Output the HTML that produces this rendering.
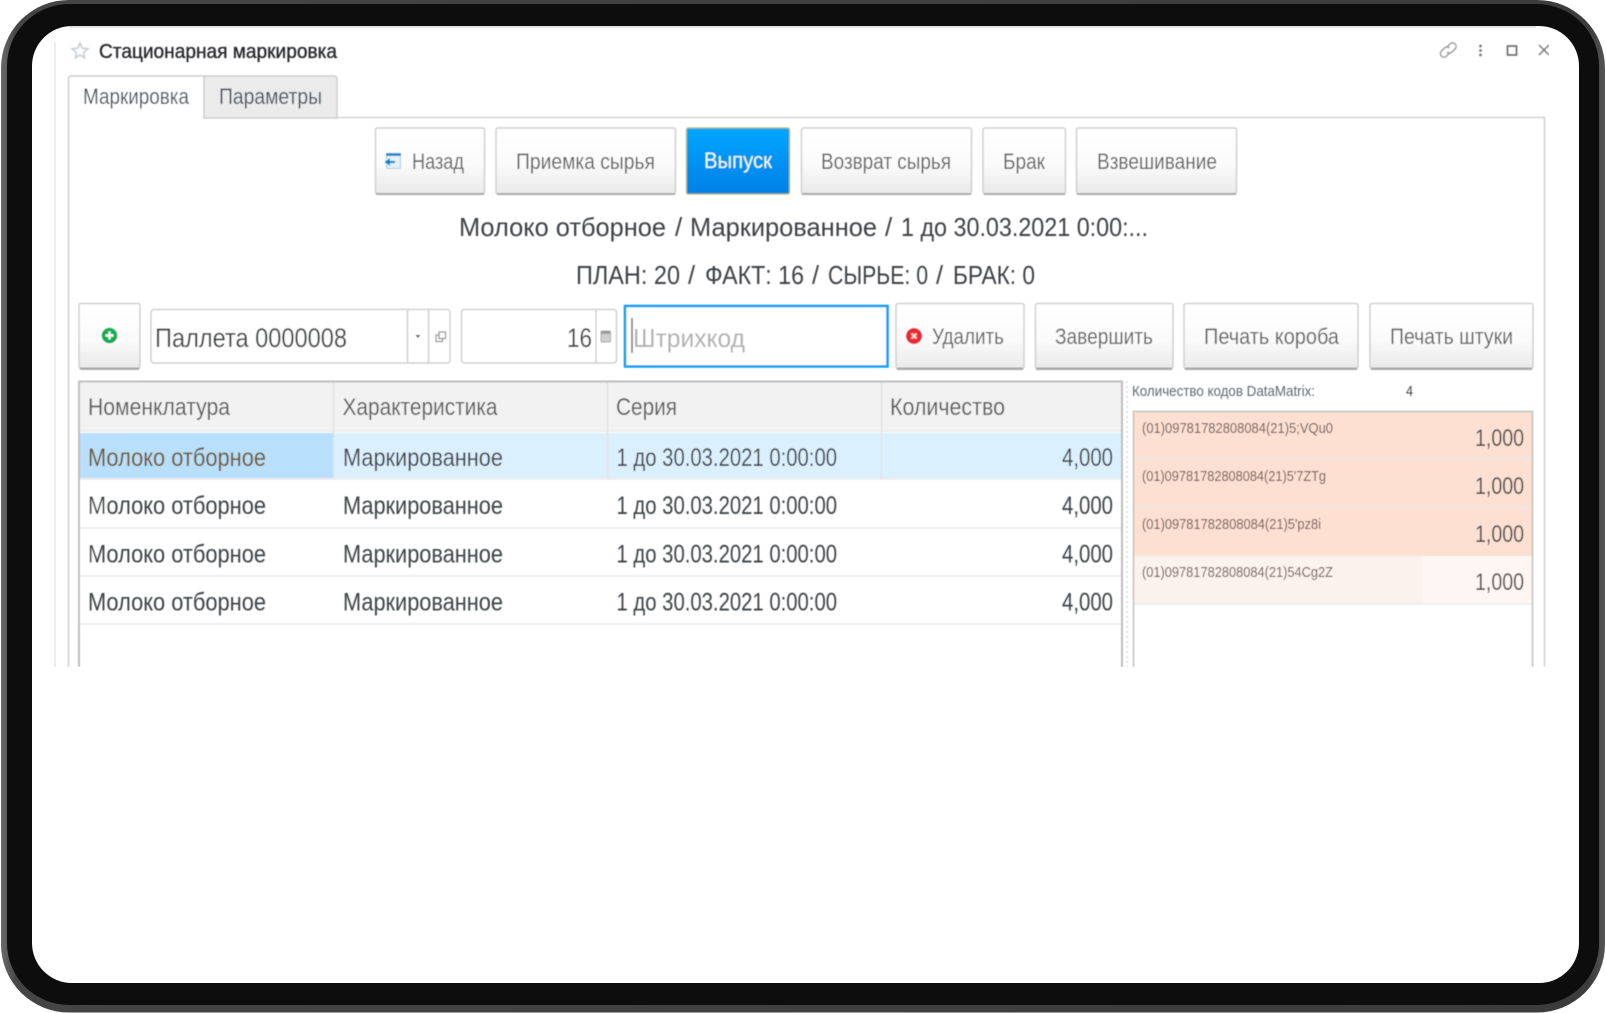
<!DOCTYPE html>
<html lang="ru">
<head>
<meta charset="utf-8">
<title>Стационарная маркировка</title>
<style>
html,body{margin:0;padding:0;background:#fff;width:1606px;height:1013px;overflow:hidden}
svg{display:block}
text{font-family:"Liberation Sans",sans-serif;fill:#4a4a4a}
.b{fill:url(#btn);stroke:#cfcfcf;stroke-width:1.5}
.bs{fill:#a8a8a8}
.btxt{font-size:22px;fill:#626262}
.cell{font-size:25px;fill:#3e4245}
.hdr{font-size:24px;fill:#5c5c5c}
.code{font-size:14.5px;fill:#6a5650}
.num{font-size:24px;fill:#484848}
.h1{font-size:26px;fill:#3e4144}
.h2{font-size:25.5px;fill:#3e4144}
</style>
</head>
<body>
<svg width="1606" height="1013" viewBox="0 0 1606 1013" xmlns="http://www.w3.org/2000/svg">
<defs>
<linearGradient id="btn" x1="0" y1="0" x2="0" y2="1">
<stop offset="0" stop-color="#fff"/><stop offset=".55" stop-color="#fbfbfb"/><stop offset="1" stop-color="#e9e9e9"/>
</linearGradient>
<linearGradient id="blue" x1="0" y1="0" x2="0" y2="1">
<stop offset="0" stop-color="#00a6ff"/><stop offset="1" stop-color="#0080e6"/>
</linearGradient>
<linearGradient id="edge" x1="0" y1="0" x2="1" y2="0">
<stop offset="0" stop-color="#6a6a6a"/><stop offset=".01" stop-color="#454545"/><stop offset=".99" stop-color="#3c3c3c"/><stop offset="1" stop-color="#555"/>
</linearGradient>
<filter id="soft" x="0" y="0" width="100%" height="100%"><feGaussianBlur stdDeviation="0.5"/></filter>
</defs>

<!-- device -->
<rect x="1" y="0" width="1604" height="1012.500" rx="68" fill="url(#edge)"/>
<rect x="7" y="4" width="1592" height="1001" rx="62" fill="#0d0d0d"/>
<rect x="32" y="26" width="1547" height="957" rx="40" fill="#fff"/>
<line x1="70" y1="27" x2="1536" y2="27" stroke="#c8c8c8" stroke-width="1"/>

<g filter="url(#soft)">
<!-- window frame -->
<line x1="54.500" y1="42" x2="54.500" y2="667" stroke="#c4c4c4" stroke-width="1.200"/>

<!-- star -->
<path d="M80 43l2.200 5.200 5.600.5-4.300 3.700 1.300 5.500L80 55l-4.800 2.900 1.300-5.500-4.300-3.700 5.600-.5z" fill="none" stroke="#c9ced2" stroke-width="1.600"/>
<text x="99" y="58" font-size="20" style="fill:#26282a;stroke:#26282a;stroke-width:.35px" textLength="238" lengthAdjust="spacingAndGlyphs">Стационарная маркировка</text>

<!-- header icons -->
<g fill="none" stroke="#9a9a9a" stroke-width="1.400" stroke-linecap="round">
<path d="M1447 47l3.500-3.500a3.600 3.600 0 0 1 5 5l-3.500 3.500a3.600 3.600 0 0 1-4.500.4"/>
<path d="M1449.500 53l-3.500 3.500a3.600 3.600 0 0 1-5-5l3.500-3.500a3.600 3.600 0 0 1 4.500-.4"/>
</g>
<circle cx="1480.500" cy="46" r="1.400" fill="#777"/><circle cx="1480.500" cy="50.500" r="1.400" fill="#777"/><circle cx="1480.500" cy="55" r="1.400" fill="#777"/>
<rect x="1507.500" y="46" width="9" height="9" fill="none" stroke="#666" stroke-width="1.600"/>
<path d="M1539 45l10 10M1549 45l-10 10" stroke="#777" stroke-width="1.400" fill="none"/>

<!-- tabs + panel -->
<path d="M68.500 667V79q0-3 3-3H204V118" fill="#fff" stroke="#cdcdcd" stroke-width="1.500"/>
<path d="M204 118V76H334q3 0 3 3V118z" fill="#ebebeb" stroke="#cdcdcd" stroke-width="1.500"/>
<path d="M337 117.500H1544.500V667" fill="none" stroke="#d2d2d2" stroke-width="1.500"/>
<text x="83" y="104" font-size="22" style="fill:#46525c" textLength="106" lengthAdjust="spacingAndGlyphs">Маркировка</text>
<text x="219" y="104" font-size="22" style="fill:#46525c" textLength="103" lengthAdjust="spacingAndGlyphs">Параметры</text>

<!-- top buttons -->
<rect x="375.500" y="128" width="109" height="66" rx="2" class="b"/><rect x="376" y="193" width="108" height="2" class="bs"/>
<rect x="496" y="128" width="179.500" height="66" rx="2" class="b"/><rect x="497" y="193" width="178" height="2" class="bs"/>
<rect x="686.500" y="128" width="103" height="66" rx="2" fill="url(#blue)" stroke="#b7b36a" stroke-width="1.200"/>
<rect x="801.500" y="128" width="170" height="66" rx="2" class="b"/><rect x="802" y="193" width="169" height="2" class="bs"/>
<rect x="983" y="128" width="82.500" height="66" rx="2" class="b"/><rect x="984" y="193" width="81" height="2" class="bs"/>
<rect x="1076.500" y="128" width="160" height="66" rx="2" class="b"/><rect x="1077" y="193" width="159" height="2" class="bs"/>

<!-- back icon -->
<rect x="386.500" y="153.500" width="14" height="15" rx="1.500" fill="#e6f2f9" stroke="#a7cde4" stroke-width="1"/>
<rect x="386" y="153" width="15" height="3" fill="#1d8fd0"/>
<path d="M385 162h10" stroke="#0d84cc" stroke-width="2.200" fill="none"/>
<path d="M385 162l5-4v8z" fill="#0d84cc"/>

<text x="412" y="169" class="btxt" textLength="52" lengthAdjust="spacingAndGlyphs">Назад</text>
<text x="516" y="169" class="btxt" textLength="139" lengthAdjust="spacingAndGlyphs">Приемка сырья</text>
<text x="704" y="168" class="btxt" style="fill:#f2f9ff" textLength="68" lengthAdjust="spacingAndGlyphs">Выпуск</text>
<text x="821" y="169" class="btxt" textLength="130" lengthAdjust="spacingAndGlyphs">Возврат сырья</text>
<text x="1003" y="169" class="btxt" textLength="42" lengthAdjust="spacingAndGlyphs">Брак</text>
<text x="1097" y="169" class="btxt" textLength="120" lengthAdjust="spacingAndGlyphs">Взвешивание</text>

<!-- headings -->
<text x="459" y="236" class="h1" textLength="207" lengthAdjust="spacingAndGlyphs">Молоко отборное</text>
<text x="675" y="236" class="h1">/</text>
<text x="690" y="236" class="h1" textLength="187" lengthAdjust="spacingAndGlyphs">Маркированное</text>
<text x="885" y="236" class="h1">/</text>
<text x="901" y="236" class="h1" textLength="247" lengthAdjust="spacingAndGlyphs">1 до 30.03.2021 0:00:...</text>

<text x="576" y="284" class="h2" textLength="104" lengthAdjust="spacingAndGlyphs">ПЛАН: 20</text>
<text x="688" y="284" class="h2">/</text>
<text x="705" y="284" class="h2" textLength="99" lengthAdjust="spacingAndGlyphs">ФАКТ: 16</text>
<text x="812" y="284" class="h2">/</text>
<text x="828" y="284" class="h2" textLength="100" lengthAdjust="spacingAndGlyphs">СЫРЬЕ: 0</text>
<text x="936" y="284" class="h2">/</text>
<text x="953" y="284" class="h2" textLength="82" lengthAdjust="spacingAndGlyphs">БРАК: 0</text>

<!-- add button -->
<rect x="79" y="303.500" width="61" height="65" rx="2" class="b"/><rect x="80" y="367.500" width="59" height="2.500" class="bs"/>
<circle cx="109.500" cy="335.500" r="7.800" fill="#0aae50"/>
<path d="M109.500 331.500v8M105.500 335.500h8" stroke="#fff" stroke-width="2.400"/>

<!-- pallet field -->
<rect x="151" y="309.500" width="299" height="53.500" rx="3" fill="#fff" stroke="#cfcfcf" stroke-width="1.500"/>
<line x1="407.500" y1="310" x2="407.500" y2="363" stroke="#cfcfcf" stroke-width="1.500"/>
<line x1="428.500" y1="310" x2="428.500" y2="363" stroke="#cfcfcf" stroke-width="1.500"/>
<path d="M415.500 335h5l-2.500 3z" fill="#555"/>
<rect x="436" y="335" width="6.500" height="6.500" fill="#fff" stroke="#8a8a8a" stroke-width="1.200"/>
<rect x="439" y="332" width="6.500" height="6.500" fill="#fff" stroke="#8a8a8a" stroke-width="1.200"/>
<text x="155" y="347" font-size="27" style="fill:#3c3f42" textLength="192" lengthAdjust="spacingAndGlyphs">Паллета 0000008</text>

<!-- qty field -->
<rect x="461.500" y="309.500" width="155" height="53.500" rx="3" fill="#fff" stroke="#cfcfcf" stroke-width="1.500"/>
<line x1="596" y1="310" x2="596" y2="363" stroke="#cfcfcf" stroke-width="1.500"/>
<rect x="601" y="331" width="9.500" height="11" rx="1" fill="#d0d0d0" stroke="#a6a6a6"/>
<rect x="601" y="331" width="9.500" height="3" fill="#9e9e9e"/>
<text x="567" y="347" font-size="27" style="fill:#3c3f42" textLength="25" lengthAdjust="spacingAndGlyphs">16</text>

<!-- barcode -->
<rect x="625" y="306" width="262.500" height="60.500" fill="#fff" stroke="#0a9cf5" stroke-width="2.500"/>
<line x1="632" y1="318" x2="632" y2="353" stroke="#666" stroke-width="1.500"/>
<text x="633" y="347" font-size="26" style="fill:#b0b0b0" textLength="112" lengthAdjust="spacingAndGlyphs">Штрихкод</text>

<!-- action buttons -->
<rect x="896" y="303.500" width="128" height="65" rx="2" class="b"/><rect x="897" y="367.500" width="126" height="2.500" class="bs"/>
<rect x="1035.500" y="303.500" width="137.500" height="65" rx="2" class="b"/><rect x="1036" y="367.500" width="136" height="2.500" class="bs"/>
<rect x="1184" y="303.500" width="174" height="65" rx="2" class="b"/><rect x="1185" y="367.500" width="172" height="2.500" class="bs"/>
<rect x="1370" y="303.500" width="163" height="65" rx="2" class="b"/><rect x="1371" y="367.500" width="161" height="2.500" class="bs"/>
<circle cx="914" cy="336" r="8" fill="#ec2730"/>
<path d="M911.500 333.500l5 5M916.500 333.500l-5 5" stroke="#fdd" stroke-width="2"/>
<text x="932" y="344" class="btxt" textLength="72" lengthAdjust="spacingAndGlyphs">Удалить</text>
<text x="1055" y="344" class="btxt" textLength="98" lengthAdjust="spacingAndGlyphs">Завершить</text>
<text x="1204" y="344" class="btxt" textLength="135" lengthAdjust="spacingAndGlyphs">Печать короба</text>
<text x="1390" y="344" class="btxt" textLength="123" lengthAdjust="spacingAndGlyphs">Печать штуки</text>

<!-- table -->
<rect x="79" y="381" width="1043" height="49" fill="#f2f2f2"/>
<rect x="79" y="433" width="1043" height="45" fill="#dbf0fe"/>
<rect x="79" y="433" width="254" height="45" fill="#b8dffb"/>
<path d="M79 431H1122M79 479H1122" stroke="#ececec" stroke-width="2" fill="none"/>
<path d="M79 528H1122M79 576H1122M79 624H1122" stroke="#e9e9e9" stroke-width="1.500" fill="none"/>
<path d="M333.500 382V478M607.500 382V478M881.500 382V478" stroke="#e2e2e2" stroke-width="1.500" fill="none"/>
<path d="M79 667V381.500H1122V667" fill="none" stroke="#bdbdbd" stroke-width="2"/>

<text x="88" y="415" class="hdr" textLength="142" lengthAdjust="spacingAndGlyphs">Номенклатура</text>
<text x="342.500" y="415" class="hdr" textLength="155" lengthAdjust="spacingAndGlyphs">Характеристика</text>
<text x="616" y="415" class="hdr" textLength="61" lengthAdjust="spacingAndGlyphs">Серия</text>
<text x="890" y="415" class="hdr" textLength="115" lengthAdjust="spacingAndGlyphs">Количество</text>

<text x="88" y="466" class="cell" style="fill:#6f5620" textLength="178" lengthAdjust="spacingAndGlyphs">Молоко отборное</text>
<text x="343" y="466" class="cell" textLength="160" lengthAdjust="spacingAndGlyphs">Маркированное</text>
<text x="616.500" y="466" class="cell" textLength="220.500" lengthAdjust="spacingAndGlyphs">1 до 30.03.2021 0:00:00</text>
<text x="1062" y="466" class="cell" textLength="51" lengthAdjust="spacingAndGlyphs">4,000</text>

<text x="88" y="514" class="cell" textLength="178" lengthAdjust="spacingAndGlyphs">Молоко отборное</text>
<text x="343" y="514" class="cell" textLength="160" lengthAdjust="spacingAndGlyphs">Маркированное</text>
<text x="616.500" y="514" class="cell" textLength="220.500" lengthAdjust="spacingAndGlyphs">1 до 30.03.2021 0:00:00</text>
<text x="1062" y="514" class="cell" textLength="51" lengthAdjust="spacingAndGlyphs">4,000</text>

<text x="88" y="562.500" class="cell" textLength="178" lengthAdjust="spacingAndGlyphs">Молоко отборное</text>
<text x="343" y="562.500" class="cell" textLength="160" lengthAdjust="spacingAndGlyphs">Маркированное</text>
<text x="616.500" y="562.500" class="cell" textLength="220.500" lengthAdjust="spacingAndGlyphs">1 до 30.03.2021 0:00:00</text>
<text x="1062" y="562.500" class="cell" textLength="51" lengthAdjust="spacingAndGlyphs">4,000</text>

<text x="88" y="610.500" class="cell" textLength="178" lengthAdjust="spacingAndGlyphs">Молоко отборное</text>
<text x="343" y="610.500" class="cell" textLength="160" lengthAdjust="spacingAndGlyphs">Маркированное</text>
<text x="616.500" y="610.500" class="cell" textLength="220.500" lengthAdjust="spacingAndGlyphs">1 до 30.03.2021 0:00:00</text>
<text x="1062" y="610.500" class="cell" textLength="51" lengthAdjust="spacingAndGlyphs">4,000</text>

<!-- splitter -->
<line x1="1127" y1="381" x2="1127" y2="667" stroke="#d5d5d5" stroke-width="1.500" stroke-dasharray="2 3"/>

<!-- right panel -->
<text x="1132" y="396" font-size="14.500" style="fill:#5f6874" textLength="183" lengthAdjust="spacingAndGlyphs">Количество кодов DataMatrix:</text>
<text x="1406" y="396" font-size="14.500" style="fill:#444" textLength="7" lengthAdjust="spacingAndGlyphs">4</text>

<rect x="1133" y="412" width="400" height="192" fill="#f0e6e0"/>
<rect x="1133" y="412" width="400" height="46" fill="#fde0d2"/>
<rect x="1133" y="460" width="400" height="46.500" fill="#fde0d2"/>
<rect x="1133" y="508.500" width="400" height="47" fill="#fde0d2"/>
<rect x="1133" y="556" width="290" height="47" fill="#fcf2ed"/>
<rect x="1423" y="556" width="110" height="47" fill="#fef6f2"/>
<line x1="1133" y1="604" x2="1533" y2="604" stroke="#eeeeee" stroke-width="1.500"/>
<path d="M1133.500 667V411.500H1532.500V667" fill="none" stroke="#c0c0c0" stroke-width="1.500"/>

<text x="1142" y="433" class="code" textLength="191" lengthAdjust="spacingAndGlyphs">(01)09781782808084(21)5;VQu0</text>
<text x="1142" y="481" class="code" textLength="184" lengthAdjust="spacingAndGlyphs">(01)09781782808084(21)5'7ZTg</text>
<text x="1142" y="529" class="code" textLength="179" lengthAdjust="spacingAndGlyphs">(01)09781782808084(21)5'pz8i</text>
<text x="1142" y="577" class="code" textLength="191" lengthAdjust="spacingAndGlyphs">(01)09781782808084(21)54Cg2Z</text>

<text x="1475" y="446" class="num" textLength="49" lengthAdjust="spacingAndGlyphs">1,000</text>
<text x="1475" y="494" class="num" textLength="49" lengthAdjust="spacingAndGlyphs">1,000</text>
<text x="1475" y="542" class="num" textLength="49" lengthAdjust="spacingAndGlyphs">1,000</text>
<text x="1475" y="590" class="num" textLength="49" lengthAdjust="spacingAndGlyphs">1,000</text>
</g>
</svg>
</body>
</html>
